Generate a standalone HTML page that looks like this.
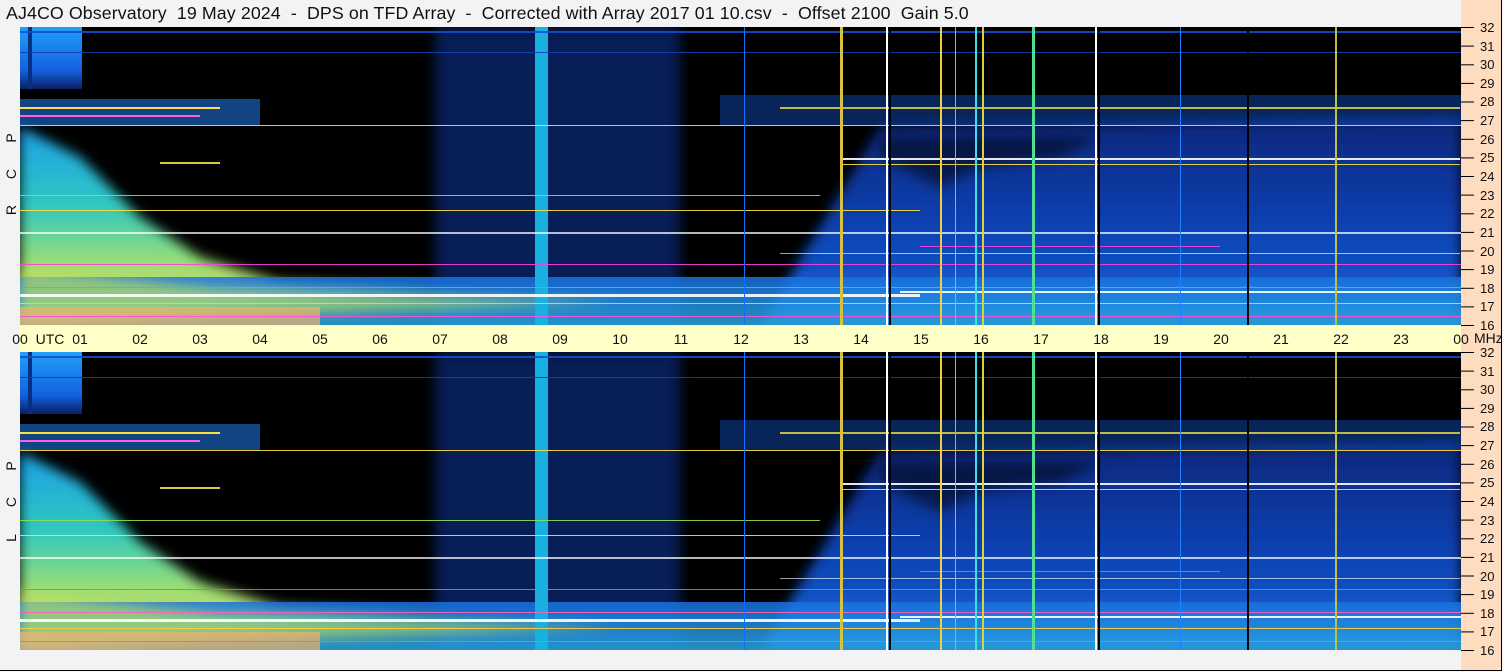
<!DOCTYPE html>
<html><head><meta charset="utf-8"><style>
html,body{margin:0;padding:0}
body{width:1503px;height:672px;background:#f3f3f6;position:relative;overflow:hidden;font-family:"Liberation Sans",sans-serif}
.title{position:absolute;left:6px;top:3px;font-size:17.8px;color:#111;white-space:pre;letter-spacing:0.1px}
.frame{position:absolute;left:0;top:0;width:1501px;height:670px;border-right:1px solid #000;border-bottom:1px solid #000;box-sizing:content-box}
.rax{position:absolute;left:1461px;top:0;width:40px;height:670px;background:#fddcbf}
.lbl{position:absolute;font-size:13px;color:#111;line-height:13px}
.t{position:absolute;width:30px;margin-left:-15px;text-align:center;top:331px;font-size:14px;color:#111}
.side{position:absolute;left:4px;font-size:14px;color:#111;transform:rotate(-90deg);width:14px;text-align:center}
</style></head><body>
<div class="rax"></div>
<div class="title">AJ4CO Observatory  19 May 2024  -  DPS on TFD Array  -  Corrected with Array 2017 01 10.csv  -  Offset 2100  Gain 5.0</div>
<div style="position:absolute;left:20px;top:326px;width:1441px;height:26px;background:#ffffc8"></div>
<svg width="1503" height="672" style="position:absolute;left:0;top:0">
<defs>
<clipPath id="cp"><rect width="1441" height="298"/></clipPath>
<linearGradient id="lt" x1="0" y1="0" x2="0" y2="1">
<stop offset="0" stop-color="#1aa0e8"/><stop offset="0.4" stop-color="#30c8c0"/><stop offset="0.7" stop-color="#9ee070"/><stop offset="1" stop-color="#f2c070"/></linearGradient>
<linearGradient id="rb" x1="0" y1="0" x2="0" y2="1">
<stop offset="0" stop-color="#08267a"/><stop offset="0.5" stop-color="#0c40b0"/><stop offset="1" stop-color="#1864d8"/></linearGradient>
<linearGradient id="bb" x1="0" y1="0" x2="0" y2="1">
<stop offset="0" stop-color="#1870e0"/><stop offset="1" stop-color="#2aa8e0"/></linearGradient>
<linearGradient id="lc" x1="0" y1="0" x2="0" y2="1">
<stop offset="0" stop-color="#20a0f8"/><stop offset="0.7" stop-color="#1460e0"/><stop offset="1" stop-color="#082060"/></linearGradient>
<filter id="bl" x="-0.2" y="-0.2" width="1.4" height="1.4"><feGaussianBlur stdDeviation="6"/></filter>
<g id="panel" clip-path="url(#cp)">
<rect width="1441" height="298" fill="#000"/>
<rect x="415" y="0" width="245" height="298" fill="#0a3290" opacity="0.6" filter="url(#bl)"/>
<polygon points="740,298 800,200 860,100 1441,90 1441,298" fill="url(#rb)" filter="url(#bl)"/>
<polygon points="860,130 920,160 960,140 1040,130 1080,110 860,110" fill="#000" opacity="0.5" filter="url(#bl)"/>
<rect x="700" y="68" width="741" height="30" fill="#1252c8" opacity="0.45"/>
<rect x="0" y="72" width="240" height="26" fill="#1e70d8" opacity="0.6"/>
<rect x="0" y="80" width="200" height="2" fill="#ffe040"/>
<rect x="0" y="88" width="180" height="2" fill="#ff60e0"/>
<rect x="760" y="80" width="680" height="2" fill="#f0e040" opacity="0.8"/>
<polygon points="0,100 60,130 120,190 180,230 260,255 420,262 0,298" fill="url(#lt)" filter="url(#bl)"/>
<rect x="0" y="250" width="1441" height="48" fill="url(#bb)" opacity="0.85"/>
<polygon points="0,240 200,262 600,275 0,298" fill="#b8e060" opacity="0.7" filter="url(#bl)"/>
<rect x="0" y="280" width="300" height="18" fill="#f0b070" opacity="0.7"/>
<rect x="0" y="0" width="62" height="62" fill="url(#lc)"/>
<rect x="8" y="0" width="4" height="62" fill="#0a2e80"/>
<rect x="515" y="0" width="13" height="298" fill="#18b0e0"/>
<g opacity="0.9">
<rect x="0" y="4" width="1441" height="2" fill="#1050d0"/>
<rect x="0" y="25" width="1441" height="1" fill="#1040b0"/>
<rect x="0" y="98" width="1441" height="1" fill="#ffe040"/>
<rect x="0" y="205" width="1441" height="2" fill="#ffffff" opacity="0.8"/>
<rect x="0" y="237" width="1441" height="1" fill="#ff40e0"/>
<rect x="0" y="260" width="1441" height="1" fill="#ff60c0"/>
<rect x="0" y="267" width="900" height="3" fill="#ffffff"/>
<rect x="880" y="264" width="561" height="2" fill="#ffffff"/>
<rect x="0" y="276" width="1441" height="1" fill="#ffd040"/>
<rect x="0" y="289" width="1441" height="1" fill="#ff50e0"/>
<rect x="820" y="131" width="620" height="2" fill="#ffffff"/>
<rect x="820" y="137" width="620" height="1" fill="#ffe040"/>
<rect x="900" y="219" width="300" height="1" fill="#ff40e0"/>
<rect x="0" y="168" width="800" height="1" fill="#90e050"/>
<rect x="0" y="183" width="900" height="1" fill="#ffe040"/>
<rect x="140" y="135" width="60" height="2" fill="#f0e040"/>
<rect x="760" y="226" width="680" height="1" fill="#ffffff" opacity="0.7"/>
</g>
<rect x="820" y="0" width="3" height="298" fill="#d8c040"/>
<rect x="866" y="0" width="2" height="298" fill="#ffffff"/>
<rect x="869" y="0" width="2" height="298" fill="#000"/>
<rect x="920" y="0" width="2" height="298" fill="#f0d040"/>
<rect x="935" y="0" width="1" height="298" fill="#40e0a0"/>
<rect x="955" y="0" width="2" height="298" fill="#40e0e0"/>
<rect x="962" y="0" width="2" height="298" fill="#e0d040"/>
<rect x="1012" y="0" width="3" height="298" fill="#50e090"/>
<rect x="1075" y="0" width="2" height="298" fill="#ffffff"/>
<rect x="1078" y="0" width="2" height="298" fill="#000"/>
<rect x="1227" y="0" width="2" height="298" fill="#000"/>
<rect x="1315" y="0" width="2" height="298" fill="#c0c040"/>
<rect x="724" y="0" width="1" height="298" fill="#1070ff"/>
<rect x="1160" y="0" width="1" height="298" fill="#2080ff"/>
</g>
</defs>
<use href="#panel" x="20" y="27"/>
<use href="#panel" x="20" y="352"/>
<g stroke="#000" stroke-width="1">
<line x1="1461" y1="27.5" x2="1474" y2="27.5"/><line x1="1461" y1="46.1" x2="1474" y2="46.1"/><line x1="1461" y1="64.8" x2="1474" y2="64.8"/><line x1="1461" y1="83.4" x2="1474" y2="83.4"/><line x1="1461" y1="102" x2="1474" y2="102"/><line x1="1461" y1="120.6" x2="1474" y2="120.6"/><line x1="1461" y1="139.3" x2="1474" y2="139.3"/><line x1="1461" y1="157.9" x2="1474" y2="157.9"/><line x1="1461" y1="176.5" x2="1474" y2="176.5"/><line x1="1461" y1="195.1" x2="1474" y2="195.1"/><line x1="1461" y1="213.8" x2="1474" y2="213.8"/><line x1="1461" y1="232.4" x2="1474" y2="232.4"/><line x1="1461" y1="251" x2="1474" y2="251"/><line x1="1461" y1="269.6" x2="1474" y2="269.6"/><line x1="1461" y1="288.3" x2="1474" y2="288.3"/><line x1="1461" y1="306.9" x2="1474" y2="306.9"/><line x1="1461" y1="325.5" x2="1474" y2="325.5"/>
<line x1="1461" y1="352.5" x2="1474" y2="352.5"/><line x1="1461" y1="371.1" x2="1474" y2="371.1"/><line x1="1461" y1="389.8" x2="1474" y2="389.8"/><line x1="1461" y1="408.4" x2="1474" y2="408.4"/><line x1="1461" y1="427" x2="1474" y2="427"/><line x1="1461" y1="445.6" x2="1474" y2="445.6"/><line x1="1461" y1="464.3" x2="1474" y2="464.3"/><line x1="1461" y1="482.9" x2="1474" y2="482.9"/><line x1="1461" y1="501.5" x2="1474" y2="501.5"/><line x1="1461" y1="520.1" x2="1474" y2="520.1"/><line x1="1461" y1="538.8" x2="1474" y2="538.8"/><line x1="1461" y1="557.4" x2="1474" y2="557.4"/><line x1="1461" y1="576" x2="1474" y2="576"/><line x1="1461" y1="594.6" x2="1474" y2="594.6"/><line x1="1461" y1="613.3" x2="1474" y2="613.3"/><line x1="1461" y1="631.9" x2="1474" y2="631.9"/><line x1="1461" y1="650.5" x2="1474" y2="650.5"/>
</g>
</svg>
<div class="frame"></div>
<div class="side" style="top:130px">P</div><div class="side" style="top:166px">C</div><div class="side" style="top:202px">R</div>
<div class="side" style="top:458px">P</div><div class="side" style="top:494px">C</div><div class="side" style="top:530px">L</div>
<div class="lbl" style="left:1480px;top:21px">32</div><div class="lbl" style="left:1480px;top:40px">31</div><div class="lbl" style="left:1480px;top:58px">30</div><div class="lbl" style="left:1480px;top:77px">29</div><div class="lbl" style="left:1480px;top:95px">28</div><div class="lbl" style="left:1480px;top:114px">27</div><div class="lbl" style="left:1480px;top:133px">26</div><div class="lbl" style="left:1480px;top:151px">25</div><div class="lbl" style="left:1480px;top:170px">24</div><div class="lbl" style="left:1480px;top:189px">23</div><div class="lbl" style="left:1480px;top:207px">22</div><div class="lbl" style="left:1480px;top:226px">21</div><div class="lbl" style="left:1480px;top:245px">20</div><div class="lbl" style="left:1480px;top:263px">19</div><div class="lbl" style="left:1480px;top:282px">18</div><div class="lbl" style="left:1480px;top:300px">17</div><div class="lbl" style="left:1480px;top:319px">16</div>
<div class="lbl" style="left:1480px;top:346px">32</div><div class="lbl" style="left:1480px;top:365px">31</div><div class="lbl" style="left:1480px;top:383px">30</div><div class="lbl" style="left:1480px;top:402px">29</div><div class="lbl" style="left:1480px;top:420px">28</div><div class="lbl" style="left:1480px;top:439px">27</div><div class="lbl" style="left:1480px;top:458px">26</div><div class="lbl" style="left:1480px;top:476px">25</div><div class="lbl" style="left:1480px;top:495px">24</div><div class="lbl" style="left:1480px;top:514px">23</div><div class="lbl" style="left:1480px;top:532px">22</div><div class="lbl" style="left:1480px;top:551px">21</div><div class="lbl" style="left:1480px;top:570px">20</div><div class="lbl" style="left:1480px;top:588px">19</div><div class="lbl" style="left:1480px;top:607px">18</div><div class="lbl" style="left:1480px;top:625px">17</div><div class="lbl" style="left:1480px;top:644px">16</div>
<div class="t" style="left:20px">00</div><div class="t" style="left:50px">UTC</div><div class="t" style="left:80px">01</div><div class="t" style="left:140px">02</div><div class="t" style="left:200px">03</div><div class="t" style="left:260px">04</div><div class="t" style="left:320px">05</div><div class="t" style="left:380px">06</div><div class="t" style="left:440px">07</div><div class="t" style="left:500px">08</div><div class="t" style="left:560px">09</div><div class="t" style="left:620px">10</div><div class="t" style="left:681px">11</div><div class="t" style="left:741px">12</div><div class="t" style="left:801px">13</div><div class="t" style="left:861px">14</div><div class="t" style="left:921px">15</div><div class="t" style="left:981px">16</div><div class="t" style="left:1041px">17</div><div class="t" style="left:1101px">18</div><div class="t" style="left:1161px">19</div><div class="t" style="left:1221px">20</div><div class="t" style="left:1281px">21</div><div class="t" style="left:1341px">22</div><div class="t" style="left:1401px">23</div><div class="t" style="left:1461px">00</div>
<div class="lbl" style="left:1474px;top:332px;font-size:14px">MHz</div>
</body></html>
